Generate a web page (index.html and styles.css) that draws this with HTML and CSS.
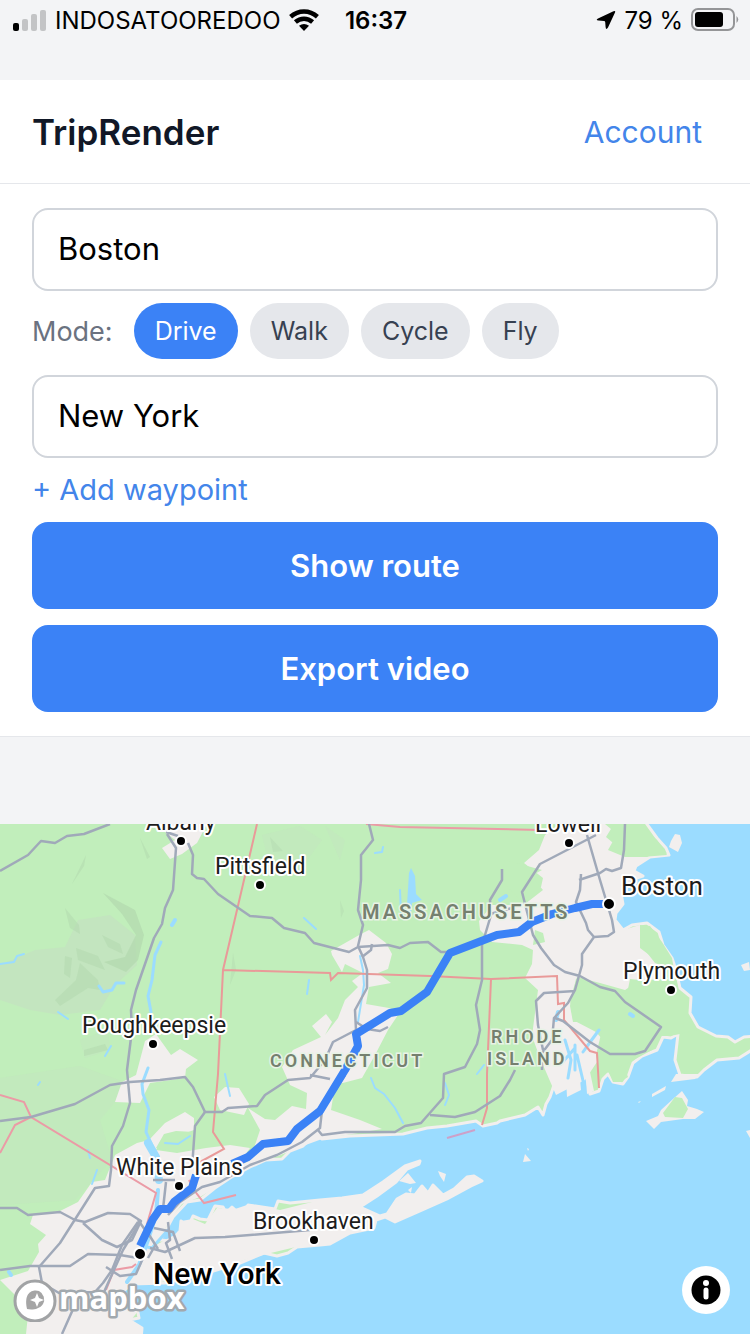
FILE: index.html
```html
<!DOCTYPE html>
<html lang="en">
<head>
<meta charset="utf-8">
<meta name="viewport" content="width=device-width, initial-scale=1">
<title>TripRender</title>
<link rel="stylesheet" href="styles.css">
</head>
<body>
<div class="status">
  <div class="status-side">
    <svg class="signal" width="34" height="22" viewBox="0 0 34 22" aria-hidden="true">
      <rect x="0" y="14" width="6" height="8" rx="2"/>
      <g fill="#c3c4c6"><rect x="9" y="10" width="6" height="12" rx="2"/><rect x="18" y="5" width="6" height="17" rx="2"/><rect x="27" y="1" width="6" height="21" rx="2"/></g>
    </svg>
    <span class="carrier">INDOSATOOREDOO</span>
    <svg class="wifi" width="30" height="22" viewBox="0 0 30 22" aria-hidden="true">
      <g fill="none" stroke="#000" stroke-width="4.500"><path d="M1.600 7.800C9.500.800 20.500.800 28.400 7.800"/><path d="M6.400 13C11.500 8.500 18.500 8.500 23.600 13"/></g>
      <path d="M10 16.800Q15 13 20 16.800L15 22Z"/>
    </svg>
  </div>
  <time class="clock">16:37</time>
  <div class="status-side status-end">
    <svg class="arrow" width="20" height="20" viewBox="0 0 20 20" aria-hidden="true"><path d="M17.500 1.300Q19.800.200 19 2.500L12 17.500Q10 20.500 9.600 17L9.200 12Q9 11 8 10.900L2.500 10.600Q-.800 10 2 8.400Z"/></svg>
    <span>79 %</span>
    <svg class="battery" width="48" height="24" viewBox="0 0 48 24" aria-hidden="true">
      <rect x="1" y="1" width="42" height="21" rx="6" fill="none" stroke="#949597" stroke-width="2"/>
      <rect x="4" y="4" width="28" height="15" rx="3"/><path d="M45.500 8Q49 11.500 45.500 15Z" fill="#949597"/>
    </svg>
  </div>
</div>

<header class="header">
  <h1 class="brand">TripRender</h1>
  <a class="link" href="#account">Account</a>
</header>

<main class="main">
  <form class="planner">
    <input class="place" type="text" value="Boston" aria-label="Start">
    <div class="modes" role="group" aria-labelledby="mode-label">
      <span class="modes-label" id="mode-label">Mode:</span>
      <button class="chip chip-active" type="button" aria-pressed="true">Drive</button>
      <button class="chip" type="button" aria-pressed="false">Walk</button>
      <button class="chip" type="button" aria-pressed="false">Cycle</button>
      <button class="chip" type="button" aria-pressed="false">Fly</button>
    </div>
    <input class="place" type="text" value="New York" aria-label="Destination">
    <button class="link add" type="button">+ Add waypoint</button>
    <div class="actions">
      <button class="primary" type="button">Show route</button>
      <button class="primary" type="button">Export video</button>
    </div>
  </form>

  <section class="map" aria-label="Route map">
    <svg class="map-canvas" viewBox="0 824 750 510" preserveAspectRatio="xMidYMid slice">
      <rect y="824" width="750" height="510" fill="#c1eebb"/>
      <!-- terrain -->
      <g fill="#c3e5bf">
        <path d="M0 965L35 950 65 947 78 920 110 915 135 935 137 965 115 985 100 1010 60 1015 30 1010 0 1000Z"/>
        <path d="M80 1040L108 1030 110 1050 85 1058ZM0 1078L80 1066 130 1084 100 1120 112 1160 75 1200 0 1205Z" opacity=".5"/>
        <path d="M262 835L300 826 322 840 300 870 268 860ZM325 826L345 840 340 860Z" opacity=".5"/>
      </g>
      <g fill="#b2d8ae">
        <path d="M103 893L135 910 144 935 138 960 126 972 104 962 125 957 136 935 122 914Z" opacity=".7"/>
        <path d="M65 908L79 925 80 934 70 928ZM65 956L72 958 70 978 64 974ZM76 948L98 956 105 970 78 960ZM80 963L98 980 100 990 88 988 60 1006 55 1000 76 980ZM102 935L120 944 123 954 108 947ZM84 1050L105 1044 108 1050 84 1056ZM72 884L86 855 84 866ZM140 838L150 857 147 859Z" opacity=".5"/>
        <path d="M270 837L283 851 273 852ZM230 985L233 953 236 970ZM340 900L344 911 341 918Z" opacity=".4"/>
      </g>

      <!-- ocean -->
      <path fill="#9bdcff" stroke="#f2efee" stroke-width="3" stroke-linejoin="round" d="M644 820L657 838 666 848 669 855 650 857 636 866 634 871 643 876 630 880 621 893 623 904 616 913 615 920 623 930 632 925 647 923 659 932 663 945 672 958 676 970 680 988 691 997 690 1013 698 1027 716 1036 728 1037 735 1042 744 1037 755 1036V1048L739 1058 717 1060 704 1070 697 1077 680 1075 675 1060 678 1034 671 1038 663 1037 657 1050 642 1056 633 1063 628 1077 623 1084 613 1082 608 1074 603 1079 599 1091 590 1094 586 1074 585 1060 578 1047 567 1038 560 1030 556 1042 553 1060 554 1085 550 1097 546 1104 543 1115 538 1107 525 1115 500 1121 497 1123 483 1126 476 1121 447 1126 427 1128 403 1134 350 1136 322 1139 316 1134 303 1146 290 1151 282 1159 266 1160 250 1167 230 1178 215 1188 200 1200 187 1202 173 1217 166 1230 160 1240 171 1241 180 1231 181 1221 188 1227 193 1216 200 1219 208 1220 215 1206 223 1207 226 1213 232 1207 241 1215 248 1205 275 1209 278 1201 290 1203 320 1200 342 1198 363 1195 383 1182 405 1166 420 1161 419 1164 407 1169 396 1182 377 1196 360 1207 380 1216 387 1214 397 1199 406 1194 415 1195 422 1186 428 1193 433 1185 443 1195 454 1189 467 1177 474 1176 482 1181 471 1186 447 1199 420 1211 395 1222 385 1217 376 1220 374 1228 350 1233 330 1244 320 1245 297 1247 288 1253 277 1256 264 1253 240 1263 200 1275 165 1283 132 1284 122 1292 128 1302 122 1312 137 1307 139 1318 129 1320 142 1328 141 1340H760V820Z"/>

      <!-- built-up areas -->
      <g fill="#f2efee">
        <path d="M155 824L175 840 162 848 170 859 182 854 197 843 207 824Z"/>
        <path d="M145 1041L156 1034 171 1055 180 1049 198 1060 186 1069 185 1078 150 1083 140 1103 115 1102 122 1082 136 1075Z"/>
        <path d="M559 824H605L617 834 608 850 625 857 651 857 636 866 635 872 643 876 630 880 621 893 623 904 616 913 615 920 623 930 640 925 640 948 660 963 668 979 640 980 625 990 600 983 577 977 570 1000 573 1020 596 1032 603 1040 602 1055 595 1065 585 1080 556 1095 540 1058 532 1036 538 990 525 978 532 964 533 950 522 945 492 942 480 930 479 921 492 905 520 905 541 887 543 878 524 863 539 850 545 835Z"/>
        <path d="M361 934L369 930 386 943 392 954 388 969 378 973 391 983 369 987 366 1004 389 1008 400 1012 388 1030 375 1055 362 1078 335 1085 331 1110 360 1120 382 1129 322 1139 303 1146 250 1167 228 1180 215 1180 250 1160 260 1130 248 1108 265 1119 275 1120 292 1106 306 1109 307 1093 290 1085 282 1067 293 1050 321 1037 312 1026 326 1014 332 1022 325 1035 338 1018 345 1000 358 987 352 981 363 973 345 964 342 972 332 955 331 951Z"/>
        <path d="M149 1140L165 1123 185 1112 194 1118 194 1130 180 1135 161 1140 156 1150 177 1153 206 1148 230 1145 250 1148 225 1182 200 1197 182 1204 170 1220 156 1245 180 1232 181 1221 193 1219 205 1224 217 1208 235 1209 250 1204 280 1210 320 1200 363 1195 383 1182 405 1166 420 1161 419 1164 407 1169 396 1182 377 1196 360 1207 380 1216 387 1214 397 1199 406 1194 415 1195 422 1186 428 1193 433 1185 443 1195 454 1189 467 1177 474 1176 482 1181 471 1186 447 1199 420 1211 395 1222 385 1217 376 1220 374 1228 350 1233 330 1244 300 1246 250 1258 200 1275 150 1284 132 1284 122 1292 128 1302 122 1312 139 1310 131 1320 142 1328V1334H26L28 1315 16 1296 0 1280 28 1271 39 1252 38 1244 46 1235 30 1224 33 1215 60 1211 78 1202 92 1182 105 1180 115 1155 137 1143Z"/>
        <path d="M214 1097L225 1087 239 1088 249 1104 244 1115 220 1110Z"/>
      </g>
      <!-- greens inside the built-up areas -->
      <g fill="#c1eebb">
        <path d="M606 837L614 824H640L657 840 667 855 642 857 625 853ZM542 870L531 876 543 890 525 904 500 880 505 860ZM535 930L543 933 545 942 533 945ZM640 925L650 926 662 942 672 958 674 970 655 963 641 945ZM156 1148L164 1134 176 1131 194 1132 189 1149 177 1152ZM613 1082L609 1073 624 1066 628 1077 620 1082Z"/>
        <path d="M576 979L583 978 600 986 627 994 630 979 650 981 670 982 688 1003 688 1016 697 1030 680 1034 670 1036 661 1036 652 1050 630 1062 600 1075 596 1055 602 1030 590 1022 573 1022 570 1006Z"/>
      </g>
      <!-- islands -->
      <g fill="#f2efee">
        <path d="M671 841L675 834 680 835 682 843 678 852 669 847ZM741 965L749 962 750 970 744 971ZM566 1078L572 1070 580 1079 581 1090 567 1097ZM557 1074L561 1078 561 1092 556 1088ZM585 1065L590 1072 594 1091 587 1094ZM671 1082L676 1074 700 1074 695 1079ZM652 1094L666 1086 665 1090 652 1097ZM638 1102L641 1101 639 1103ZM646 1121L658 1116 661 1110 673 1099 682 1091 688 1100 687 1106 697 1109 704 1112 695 1119 683 1119 661 1122 654 1129ZM746 1131L750 1130V1138ZM523 1162L525 1154 531 1161ZM527 1148L529 1149 528 1151ZM399 1181L408 1173 416 1183 410 1184ZM438 1171L446 1174 444 1182 440 1176ZM408 1190L412 1187 411 1193ZM165 1247L170 1244 169 1249Z"/>
      </g>
      <path fill="#c1eebb" d="M663 1113L675 1097 682 1098 688 1109 683 1118 665 1117Z"/>

      <!-- rivers, lakes, inlets -->
      <g fill="none" stroke="#9bdcff" stroke-linecap="round" stroke-linejoin="round">
        <path stroke-width="3" d="M161 942L155 955 152 980 148 996 151 1012M148 1068L142 1084 143 1094 149 1110 146 1132 155 1152M99 986L103 992 112 990 116 983 124 983"/>
        <path stroke-width="8" d="M148 1143L156 1157 159 1180"/>
        <path stroke-width="2" d="M0 964L14 962 17 956 24 954M58 1012L68 1019M105 1056L111 1046M90 1158L88 1150M97 1170L92 1184M38 1085L40 1082M304 918L316 929M360 956L363 970 364 985 358 1022M375 853L382 852 383 847M401 913L400 890M309 980L307 994M371 1078L375 1088 384 1094 395 1108 403 1123M445 1105L449 1095 445 1083M165 1143L178 1144 190 1136M477 1074L484 1065M225 1074L230 1096"/>
        <path stroke-width="4" d="M172 925L175 920M500 900L506 896M158 1190L156 1215 148 1240 139 1265 127 1282M558 1012L556 1020M630 1014L633 1016M9 1272L11 1275"/>
        <path stroke-width="3" d="M599 1030L588 1045 583 1052M565 1040L571 1060 568 1078M577 1055L584 1085M575 1045V1070M561 1064L575 1048M168 1230L152 1248 142 1246"/>
      </g>
      <path fill="#9bdcff" d="M409 873L411 868 415 876 416 894 422 900 412 903 411 914 407 905Z"/>

      <!-- state borders -->
      <g fill="none" stroke="#e99a99" stroke-width="2">
        <path d="M257 824L244 880 223 970 218 1074 213 1132 224 1149 200 1162M223 970L330 973 331 980 338 973 430 976 491 979 557 976 558 1004 564 1003V1020L590 1051 597 1053 599 1088M491 979L487 1074V1108L482 1125"/>
        <path d="M366 824L400 827 540 830M0 1095L24 1102 31 1117 156 1193 147 1224M31 1117L15 1125 0 1153M189 1180L194 1190 204 1203 236 1195M136 1264L132 1267 114 1270 106 1290" stroke="#eb9ba6"/>
        <path d="M447 1138L475 1130" stroke="#cda0c8"/>
      </g>

      <!-- highways -->
      <g fill="none" stroke="#a0a9b9" stroke-width="2.500" stroke-linejoin="round">
        <path d="M0 871L28 855 41 841 55 843 67 836 84 834 110 824M167 834L176 848 173 890 165 908 162 924 154 938 136 990 131 1010 132 1030 127 1070 130 1103 123 1126 112 1146 111 1170 109 1186 95 1188 74 1221 60 1243 39 1267 42 1283 59 1293 95 1292 103 1283 112 1270 122 1245 138 1222"/>
        <path d="M166 832L178 836M188 843L193 855 192 874 197 878 204 879 218 894 250 916 272 918 284 928 305 933 314 943 349 952 358 947 388 945 400 948 410 943 428 942 441 952 450 952"/>
        <path d="M369 824L373 840 361 855V880L358 910 363 925 358 946 363 957 367 970V988L355 1010 356 1030 333 1042 325 1060 310 1078 288 1080 265 1095 257 1106 228 1108 222 1112H205L195 1126 192 1168"/>
        <path d="M0 1121L31 1117 75 1104 110 1085 130 1082 160 1080 185 1077 193 1087 205 1112M356 1022L367 1029 380 1031 388 1027M372 944L371 950 362 957M310 1075L330 1079"/>
        <path d="M0 1208H17L28 1215 60 1212 75 1220 85 1222 108 1213 130 1214 141 1221 132 1240 117 1247 102 1240 83 1223M0 1270L30 1266H70L88 1254 120 1255 138 1258M106 1267L120 1276 136 1274 143 1258M62 1334L78 1298 88 1292M150 1248L165 1252 195 1238 225 1237 250 1235 310 1230"/>
        <path d="M153 1180H175M166 1182L163 1209M154 1228L173 1232 180 1251M168 1222L170 1240 166 1243 172 1259M146 1230L158 1249M148 1258L156 1244M140 1222L123 1250 104 1292M138 1220L148 1234"/>
        <path d="M168 1215L180 1202 202 1187 220 1182 250 1165 277 1155 302 1142 320 1128 322 1110 345 1075M318 1130L322 1135 345 1132 395 1132 405 1126 421 1123 443 1098 444 1074 465 1067 477 1044 480 1030 476 1005 482 980V945L491 915 490 900 502 880V869M430 1115L455 1117 475 1112 500 1096 510 1080 515 1070"/>
        <path d="M587 835L600 880 612 920 614 932 608 936 594 937 582 954V965L575 990 568 1003 554 1018 552 1040 542 1053V1070M596 835L540 864 522 892 533 935 541 948 554 965 565 972 580 976 600 987 615 991 625 1002 661 1027 645 1051 635 1054H610L590 1042 563 1021 555 1018M581 874L580 890 576 902 586 923 588 930 594 937M579 880L600 873 606 869 612 871 621 868 624 850 625 824M575 991L544 993 536 1001 538 1025 543 1050M490 914L512 908"/>
      </g>

      <path class="route" d="M609 904H592L575 908 552 914 532 922 519 932 497 935 450 953 427 992 401 1011 390 1013 356 1034 358 1046 345 1070 320 1111 297 1129 288 1141 263 1144 248 1157 232 1164M196 1175L192 1188 174 1202 169 1209H160L153 1219 140 1246"/>

      <g class="labels">
        <text x="146" y="830">Albany</text><text x="535" y="832">Lowell</text>
        <text x="215" y="874">Pittsfield</text><text x="621" y="895" class="city">Boston</text>
        <text x="623" y="979">Plymouth</text><text x="82" y="1033">Poughkeepsie</text>
        <text x="116" y="1175">White Plains</text><text x="253" y="1229">Brookhaven</text>
        <text x="153" y="1284" class="metro">New York</text>
      </g>
      <g class="states">
        <text x="362" y="919" class="state-large">MASSACHUSETTS</text><text x="270" y="1067">CONNECTICUT</text>
        <text x="491" y="1043">RHODE</text><text x="487" y="1065">ISLAND</text>
      </g>
      <g stroke="#fff" stroke-width="2">
        <circle cx="181" cy="841" r="5"/><circle cx="260" cy="885" r="5"/><circle cx="569" cy="843" r="5"/><circle cx="609" cy="904" r="6"/><circle cx="671" cy="990" r="5"/><circle cx="153" cy="1044" r="5"/><circle cx="179" cy="1186" r="5"/><circle cx="314" cy="1240" r="5"/><circle cx="140" cy="1254" r="6"/>
      </g>
    </svg>
    <a class="attribution" href="#mapbox" aria-label="Mapbox">
      <svg width="180" height="44" viewBox="0 0 180 44">
        <circle cx="23" cy="23" r="20" fill="#fff" stroke="#a1a3a5" stroke-width="3"/>
        <path d="M15 31C11 13 22 11 27 13A9.500 9.500 0 0 1 31 26C27 32 19 32 15 31Z" fill="#a5a5a5"/>
        <path d="M25 15L27 20 32 22 27 24 25 29 23 24 18 22 23 20Z" fill="#fff"/>
        <text x="47" y="31" class="wordmark">mapbox</text>
      </svg>
    </a>
    <button class="info" type="button" aria-label="Map information">
      <svg width="30" height="30" viewBox="0 0 30 30"><circle cx="15" cy="15" r="14.500"/><circle cx="15" cy="8" r="3" fill="#fff"/><rect x="12.500" y="12.500" width="5" height="12" rx="2.500" fill="#fff"/></svg>
    </button>
  </section>
</main>
</body>
</html>
```
FILE: styles.css
```css
* { box-sizing: border-box; }
body {
  margin: 0;
  min-height: 100vh;
  display: flex;
  flex-direction: column;
  background: #f3f4f6;
  color: #000;
  font-family: Inter, "Liberation Sans", sans-serif;
  font-size: 31px;
}
button, input { font: inherit; }
button { border: 0; cursor: pointer; }
svg { display: block; flex: none; }

.status {
  display: grid;
  grid-template-columns: 1fr auto 1fr;
  align-items: center;
  height: 40px;
  margin-bottom: 40px;
  padding: 0 11px 0 13px;
  font-size: 24px;
}
.status-side { display: flex; align-items: center; gap: 8px; white-space: nowrap; }
.status-end { justify-content: flex-end; }
.clock { font-weight: 600; }

.header {
  display: flex;
  align-items: center;
  justify-content: space-between;
  height: 104px;
  padding: 0 48px 0 32px;
  background: #fff;
  border-bottom: 1px solid #e5e7eb;
}
.brand { margin: 0; font-size: 35px; font-weight: 600; color: #111827; }
.link { color: #4385ea; font-size: 30px; text-decoration: none; }

.main { flex: 1; display: flex; flex-direction: column; gap: 87px; }
.planner {
  display: flex;
  flex-direction: column;
  padding: 24px 32px;
  background: #fff;
  border-bottom: 1px solid #e5e7eb;
}
.place {
  width: 100%;
  height: 83px;
  padding: 0 24px 2px;
  border: 2px solid #d1d5db;
  border-radius: 16px;
  background: #fff;
  color: #000;
}
.modes { display: flex; flex-wrap: wrap; align-items: center; gap: 12px; padding: 12px 0 16px; }
.modes-label { margin-right: 9px; color: #6b7280; font-size: 27px; }
.chip {
  height: 56px;
  padding: 0 21px;
  border-radius: 28px;
  background: #e5e7eb;
  color: #374151;
  font-size: 25px;
}
.chip-active { background: #3b82f6; color: #fff; }
.add { align-self: flex-start; height: 64px; padding: 0 0 2px; background: none; font-size: 29px; }
.actions { display: flex; flex-direction: column; gap: 16px; }
.primary {
  height: 87px;
  border-radius: 16px;
  background: #3b82f6;
  color: #fff;
  font-weight: 600;
}

.map { position: relative; flex: 1; min-height: 510px; overflow: hidden; background: #9bdcff; }
.map-canvas { position: absolute; inset: 0; width: 100%; height: 100%; }
.route { fill: none; stroke: #3b82f6; stroke-width: 8px; stroke-linejoin: round; }
.labels {
  font-family: Roboto, sans-serif;
  font-size: 23px;
  fill: #1c1c1c;
  stroke: #fff;
  stroke-width: 4px;
  stroke-linejoin: round;
  paint-order: stroke;
}
.city { font-size: 26px; }
.metro { font-size: 30px; font-weight: 500; fill: #000; }
.states {
  font-family: Roboto, sans-serif;
  font-size: 18px;
  font-weight: 600;
  letter-spacing: 3px;
  fill: #75806f;
  stroke: #e8f3e6;
  stroke-width: 3px;
  paint-order: stroke;
}
.state-large { font-size: 20px; }
.attribution { position: absolute; left: 12px; bottom: 12px; }
.wordmark {
  font-family: "Open Sans", sans-serif;
  font-size: 31px;
  font-weight: 700;
  fill: #fff;
  stroke: #a2a9ae;
  stroke-width: 5px;
  stroke-linejoin: round;
  paint-order: stroke;
}
.info {
  position: absolute;
  right: 20px;
  bottom: 20px;
  display: grid;
  place-items: center;
  width: 48px;
  height: 48px;
  padding: 0;
  border-radius: 50%;
  background: #fff;
}
```
